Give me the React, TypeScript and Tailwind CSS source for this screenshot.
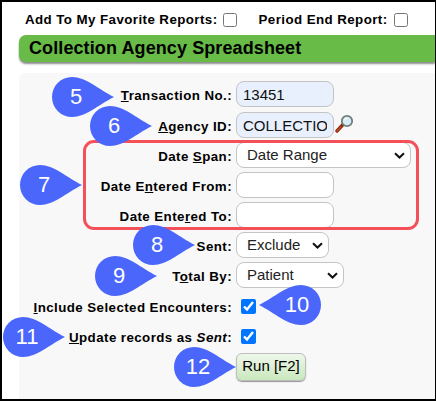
const font = "font-['Liberation_Sans',Arial,sans-serif]";

function Label({ children }: { children: React.ReactNode }) {
  return (
    <label className="w-[213px] pt-[3px] text-right text-[13.33px] font-bold tracking-[0.42px] text-black whitespace-nowrap">
      {children}
    </label>
  );
}

function Row({ label, className, children }: { label: React.ReactNode; className?: string; children: React.ReactNode }) {
  return (
    <div className={`flex h-[30px] items-center gap-[4px] ${className ?? ""}`}>
      <Label>{label}</Label>
      {children}
    </div>
  );
}

function Chevron() {
  return (
    <svg width="11" height="7" viewBox="0 0 11 7" className="pointer-events-none absolute right-[6px] top-[10px]">
      <path d="M1 1.2 L5.5 5.5 L10 1.2" fill="none" stroke="#111" strokeWidth="2" />
    </svg>
  );
}

function Select({ value, options, width }: { value: string; options: string[]; width: string }) {
  return (
    <div className={`relative ${width}`}>
      <select
        defaultValue={value}
        className="block h-[26px] w-full appearance-none rounded-[8px] border border-[#c4c4c4] bg-white pl-[10px] text-[15px] text-[#222]"
      >
        {options.map((o) => (
          <option key={o}>{o}</option>
        ))}
      </select>
      <Chevron />
    </div>
  );
}

function TextInput({ value, blue }: { value?: string; blue?: boolean }) {
  return (
    <input
      readOnly
      value={value ?? ""}
      className={`h-[26px] w-[98px] rounded-[8px] border border-[#c4c4c4] px-[6px] text-[15px] text-[#111] ${blue ? "bg-[#e8effd]" : "bg-white"}`}
    />
  );
}

function Bubble({ n, className, flip }: { n: number; className: string; flip?: boolean }) {
  return (
    <div className={`absolute h-[40px] w-[62px] ${className}`}>
      <svg width="62" height="40" viewBox="0 0 62 40" className={`absolute inset-0 ${flip ? "-scale-x-100" : ""}`}>
        <path d="M20 0 C34 0 46 12 62 20 C46 28 34 40 20 40 A20 20 0 0 1 20 0 Z" fill="#4a66fb" />
      </svg>
      <span
        className={`absolute top-0 flex h-[40px] w-[48px] items-center justify-center pb-[1px] text-[22px] text-white ${flip ? "right-0" : "left-0"}`}
      >
        {n}
      </span>
    </div>
  );
}

function Magnifier() {
  return (
    <svg width="19" height="19" viewBox="0 0 19 19" className="ml-[-3px] mb-[3px]">
      <path d="M2 17 L8 10.5" stroke="#8a2a12" strokeWidth="3.4" strokeLinecap="round" />
      <path d="M2 17 L6 12.6" stroke="#c8501f" strokeWidth="1.2" strokeLinecap="round" />
      <circle cx="12" cy="7" r="5.2" fill="#d6ecf7" stroke="#6f7f78" strokeWidth="1.8" />
      <path d="M9.5 6 A3 3 0 0 1 12 4" fill="none" stroke="#fff" strokeWidth="1.2" />
    </svg>
  );
}

export default function App() {
  return (
    <div className={`relative h-[401px] w-[436px] overflow-hidden bg-white ${font}`}>
      <div className="flex h-full flex-col border-y-2 border-l-2 border-r border-black pl-[17px]">
        {/* favorites row */}
        <div className="flex h-[33px] items-center pl-[6px] pt-[3px] text-[13.33px] font-bold tracking-[0.42px] text-black">
          <span>Add To My Favorite Reports:</span>
          <input type="checkbox" className="ml-[5px] h-[14px] w-[14px]" />
          <span className="ml-[22px]">Period End Report:</span>
          <input type="checkbox" className="ml-[6px] h-[14px] w-[14px]" />
        </div>

        <div className="flex h-[27px] items-center rounded-l-[7px] bg-[#67bb46] pb-[1px] pl-[10px] text-[18px] font-bold tracking-[0.1px] text-black shadow-[0_2px_2px_rgba(0,0,0,0.45)]">
          Collection Agency Spreadsheet
        </div>

        <div className="mt-[11px] flex-1 rounded-tl-[6px] bg-[#f8f8f8] pt-[6px]">
          <Row label={<><u>T</u>ransaction No.:</>}>
            <TextInput value="13451" blue />
          </Row>
          <Row label={<><u>A</u>gency ID:</>} className="mt-[1px]">
            <TextInput value="COLLECTIO" blue />
            <Magnifier />
          </Row>
          <Row label={<>Date <u>S</u>pan:</>}>
            <Select value="Date Range" options={["Date Range"]} width="w-[175px]" />
          </Row>
          <Row label={<>Date E<u>n</u>tered From:</>}>
            <TextInput />
          </Row>
          <Row label={<>Date Ente<u>r</u>ed To:</>}>
            <TextInput />
          </Row>
          <Row label="Sent:">
            <Select value="Exclude" options={["Exclude"]} width="w-[93px]" />
          </Row>
          <Row label={<>T<u>o</u>tal By:</>}>
            <Select value="Patient" options={["Patient"]} width="w-[108px]" />
          </Row>
          <Row label={<><u>I</u>nclude Selected Encounters:</>} className="mt-[1px]">
            <input type="checkbox" defaultChecked className="ml-[5px] h-[15px] w-[15px]" />
          </Row>
          <Row label={<><u>U</u>pdate records as <i>Sent</i>:</>}>
            <input type="checkbox" defaultChecked className="ml-[5px] h-[15px] w-[15px]" />
          </Row>
          <div className="mt-[2px] pl-[217px]">
            <button className="h-[28px] w-[70px] rounded-[6px] border border-[#bdbdbd] bg-gradient-to-b from-[#eef7ea] to-[#c9e8bd] pb-[2px] text-[15px] text-black shadow-[0_1px_1px_rgba(0,0,0,0.4)]">
              Run [F2]
            </button>
          </div>
        </div>
      </div>

      {/* callout outline */}
      <div className="absolute left-[83px] top-[140px] h-[90px] w-[336px] rounded-[11px] border-[3px] border-[#f4505a]" />

      <Bubble n={5} className="left-[52px] top-[77px]" />
      <Bubble n={6} className="left-[90px] top-[106px]" />
      <Bubble n={7} className="left-[20px] top-[165px]" />
      <Bubble n={8} className="left-[133px] top-[225px]" />
      <Bubble n={9} className="left-[95px] top-[256px]" />
      <Bubble n={10} className="left-[259px] top-[285px]" flip />
      <Bubble n={11} className="left-[3px] top-[317px]" />
      <Bubble n={12} className="left-[174px] top-[347px]" />
    </div>
  );
}
